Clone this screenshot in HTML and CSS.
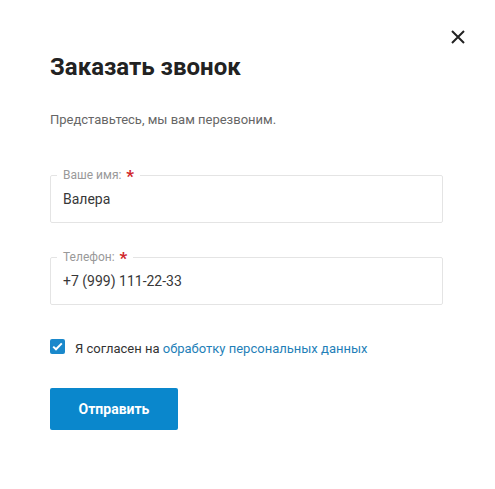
FILE: index.html
```html
<!DOCTYPE html>
<html lang="ru">
<head>
<meta charset="utf-8">
<title>Заказать звонок</title>
<link rel="stylesheet" href="styles.css">
</head>
<body>
<div class="modal">
  <button class="close" type="button" aria-label="Закрыть">
    <svg width="14" height="14" viewBox="0 0 14 14"><path d="M1 1L13 13M13 1L1 13" stroke="#222" stroke-width="2" fill="none"/></svg>
  </button>
  <h1 class="title">Заказать звонок</h1>
  <p class="subtitle">Представьтесь, мы вам перезвоним.</p>
  <form class="form">
    <fieldset class="field">
      <legend class="field-label">Ваше имя: <span class="req">*</span></legend>
      <input class="field-input" type="text" value="Валера">
    </fieldset>
    <fieldset class="field">
      <legend class="field-label">Телефон: <span class="req">*</span></legend>
      <input class="field-input" type="text" value="+7 (999) 111-22-33">
    </fieldset>
    <label class="agree">
      <span class="check">
        <svg width="11" height="9" viewBox="0 0 11 9"><path d="M1.2 4.6L4 7.3L9.8 1.4" stroke="#fff" stroke-width="2" fill="none"/></svg>
      </span>
      <span class="agree-text">Я согласен на <a class="link" href="#">обработку персональных данных</a></span>
    </label>
    <button class="submit" type="button">Отправить</button>
  </form>
</div>
</body>
</html>
```
FILE: styles.css
```css
html, body {
  margin: 0;
  padding: 0;
  background: #fff;
}
body {
  font-family: Roboto, "Noto Sans", Arial, sans-serif;
  color: #333;
}
.modal {
  position: relative;
  width: 393px;
  padding: 53px 52px 0 50px;
}
.close {
  position: absolute;
  top: 30px;
  left: 451px;
  width: 14px;
  height: 14px;
  padding: 0;
  border: 0;
  background: none;
  display: block;
}
.close svg { display: block; }
.title {
  margin: 0;
  font-size: 24px;
  line-height: 28px;
  font-weight: 700;
  color: #222;
}
.subtitle {
  margin: 31px 0 0;
  font-size: 13px;
  line-height: 16px;
  color: #666;
}
.form {
  margin-top: 40px;
  display: flex;
  flex-direction: column;
  align-items: flex-start;
}
.field {
  margin: 0 0 27px;
  padding: 0 6px;
  border: 1px solid #e4e4e4;
  border-radius: 2px;
  width: 100%;
  box-sizing: border-box;
  min-width: 0;
}
.field:last-of-type { margin-bottom: 34px; }
.field-label {
  padding: 0 6px;
  font-size: 12px;
  line-height: 14px;
  color: #999;
}
.req {
  color: #d0262b;
  font-size: 17px;
  line-height: 10px;
  font-weight: 700;
  vertical-align: -3px;
  margin-left: 2px;
}
.field-input {
  display: block;
  width: 100%;
  box-sizing: border-box;
  height: 34px;
  margin: 0 0 6px;
  padding: 0 6px;
  border: 0;
  outline: none;
  background: transparent;
  font-family: inherit;
  font-size: 14px;
  color: #383838;
}
.agree {
  display: flex;
  align-items: flex-start;
  gap: 10px;
  font-size: 13px;
  line-height: 16px;
  color: #333;
}
.agree-text { margin-top: 2px; }
.check {
  width: 15px;
  height: 15px;
  border-radius: 2px;
  background: #1a88cb;
  display: flex;
  align-items: center;
  justify-content: center;
}
.check svg { display: block; }
.link {
  color: #1f7fb8;
  text-decoration: none;
}
.submit {
  margin-top: 31px;
  width: 128px;
  height: 42px;
  border: 0;
  border-radius: 2px;
  background: #0a87cc;
  color: #fff;
  font-family: inherit;
  font-size: 14px;
  font-weight: 700;
  padding: 0;
}
```
